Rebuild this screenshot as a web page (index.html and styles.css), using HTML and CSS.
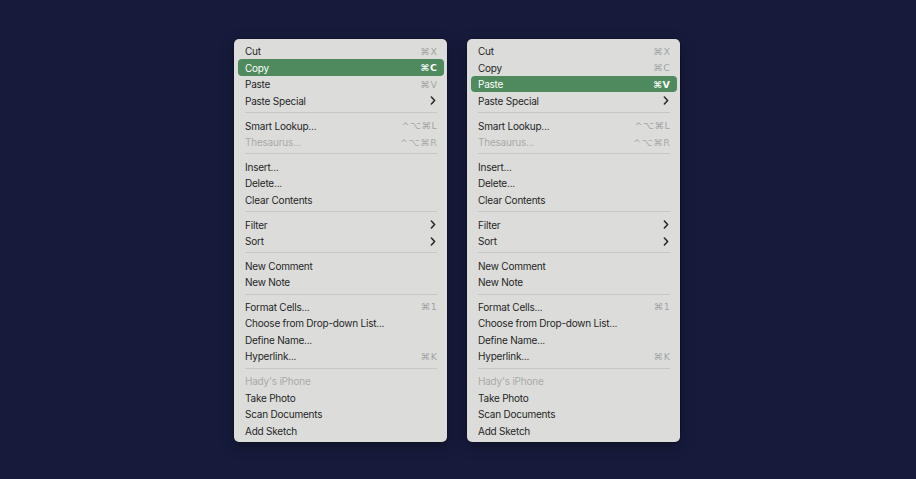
FILE: index.html
```html
<!DOCTYPE html>
<html lang="en">
<head>
<meta charset="utf-8">
<title>Context menus</title>
<link rel="stylesheet" href="styles.css">
</head>
<body>
<main class="stage">
  <div class="menu">
    <div class="item"><span class="label">Cut</span><span class="key">⌘X</span></div>
    <div class="item active"><span class="label">Copy</span><span class="key">⌘C</span></div>
    <div class="item"><span class="label">Paste</span><span class="key">⌘V</span></div>
    <div class="item"><span class="label">Paste Special</span><svg class="chev" viewBox="0 0 6 10"><path d="M1.2 1.2 L4.8 5 L1.2 8.8"/></svg></div>
    <div class="sep"></div>
    <div class="item"><span class="label">Smart Lookup...</span><span class="key">^⌥⌘L</span></div>
    <div class="item disabled"><span class="label">Thesaurus...</span><span class="key">^⌥⌘R</span></div>
    <div class="sep"></div>
    <div class="item"><span class="label">Insert...</span></div>
    <div class="item"><span class="label">Delete...</span></div>
    <div class="item"><span class="label">Clear Contents</span></div>
    <div class="sep"></div>
    <div class="item"><span class="label">Filter</span><svg class="chev" viewBox="0 0 6 10"><path d="M1.2 1.2 L4.8 5 L1.2 8.8"/></svg></div>
    <div class="item"><span class="label">Sort</span><svg class="chev" viewBox="0 0 6 10"><path d="M1.2 1.2 L4.8 5 L1.2 8.8"/></svg></div>
    <div class="sep"></div>
    <div class="item"><span class="label">New Comment</span></div>
    <div class="item"><span class="label">New Note</span></div>
    <div class="sep"></div>
    <div class="item"><span class="label">Format Cells...</span><span class="key">⌘1</span></div>
    <div class="item"><span class="label">Choose from Drop-down List...</span></div>
    <div class="item"><span class="label">Define Name...</span></div>
    <div class="item"><span class="label">Hyperlink...</span><span class="key">⌘K</span></div>
    <div class="sep"></div>
    <div class="item disabled"><span class="label">Hady's iPhone</span></div>
    <div class="item"><span class="label">Take Photo</span></div>
    <div class="item"><span class="label">Scan Documents</span></div>
    <div class="item"><span class="label">Add Sketch</span></div>
  </div>
  <div class="menu">
    <div class="item"><span class="label">Cut</span><span class="key">⌘X</span></div>
    <div class="item"><span class="label">Copy</span><span class="key">⌘C</span></div>
    <div class="item active"><span class="label">Paste</span><span class="key">⌘V</span></div>
    <div class="item"><span class="label">Paste Special</span><svg class="chev" viewBox="0 0 6 10"><path d="M1.2 1.2 L4.8 5 L1.2 8.8"/></svg></div>
    <div class="sep"></div>
    <div class="item"><span class="label">Smart Lookup...</span><span class="key">^⌥⌘L</span></div>
    <div class="item disabled"><span class="label">Thesaurus...</span><span class="key">^⌥⌘R</span></div>
    <div class="sep"></div>
    <div class="item"><span class="label">Insert...</span></div>
    <div class="item"><span class="label">Delete...</span></div>
    <div class="item"><span class="label">Clear Contents</span></div>
    <div class="sep"></div>
    <div class="item"><span class="label">Filter</span><svg class="chev" viewBox="0 0 6 10"><path d="M1.2 1.2 L4.8 5 L1.2 8.8"/></svg></div>
    <div class="item"><span class="label">Sort</span><svg class="chev" viewBox="0 0 6 10"><path d="M1.2 1.2 L4.8 5 L1.2 8.8"/></svg></div>
    <div class="sep"></div>
    <div class="item"><span class="label">New Comment</span></div>
    <div class="item"><span class="label">New Note</span></div>
    <div class="sep"></div>
    <div class="item"><span class="label">Format Cells...</span><span class="key">⌘1</span></div>
    <div class="item"><span class="label">Choose from Drop-down List...</span></div>
    <div class="item"><span class="label">Define Name...</span></div>
    <div class="item"><span class="label">Hyperlink...</span><span class="key">⌘K</span></div>
    <div class="sep"></div>
    <div class="item disabled"><span class="label">Hady's iPhone</span></div>
    <div class="item"><span class="label">Take Photo</span></div>
    <div class="item"><span class="label">Scan Documents</span></div>
    <div class="item"><span class="label">Add Sketch</span></div>
  </div>
</main>
</body>
</html>
```
FILE: styles.css
```css
html, body {
  margin: 0;
  padding: 0;
  height: 100%;
}
body {
  background: #161b3c;
  font-family: Inter, "Liberation Sans", "DejaVu Sans", sans-serif;
  font-size: 10px;
  color: #1f1f1f;
}
.stage {
  height: 479px;
  box-sizing: border-box;
  padding-top: 2px;
  padding-right: 2px;
  display: flex;
  align-items: center;
  justify-content: center;
  gap: 20px;
}
.menu {
  width: 213px;
  box-sizing: border-box;
  padding: 4px 3px 4px 4px;
  background: #dcdddb;
  border-radius: 5px;
  box-shadow: 0 0 0 0.5px rgba(0,0,0,0.35), 0 4px 14px rgba(0,0,0,0.35);
  display: flex;
  flex-direction: column;
}
.item {
  height: 16.5px;
  box-sizing: border-box;
  padding: 1px 7px 0 7px;
  display: flex;
  align-items: center;
  justify-content: space-between;
  border-radius: 4px;
  white-space: nowrap;
}
.label {
  letter-spacing: -0.22px;
}
.key {
  color: #a3a4a2;
  font-family: "DejaVu Sans", Inter, sans-serif;
  font-size: 9.5px;
  letter-spacing: 0.6px;
  margin-right: -0.5px;
}
.chev {
  width: 6px;
  height: 9px;
  margin-right: 1px;
}
.chev path {
  fill: none;
  stroke: #262626;
  stroke-width: 1.7;
  stroke-linecap: round;
  stroke-linejoin: round;
}
.item.disabled .label,
.item.disabled .key {
  color: #a9aaa8;
}
.item.active {
  background: #4e8a5d;
  color: #ffffff;
}
.item.active .key {
  color: #ffffff;
  font-weight: bold;
}
.sep {
  height: 1px;
  background: #c6c8c6;
  margin: 3.6px 7px 3.6px 7px;
}
```
